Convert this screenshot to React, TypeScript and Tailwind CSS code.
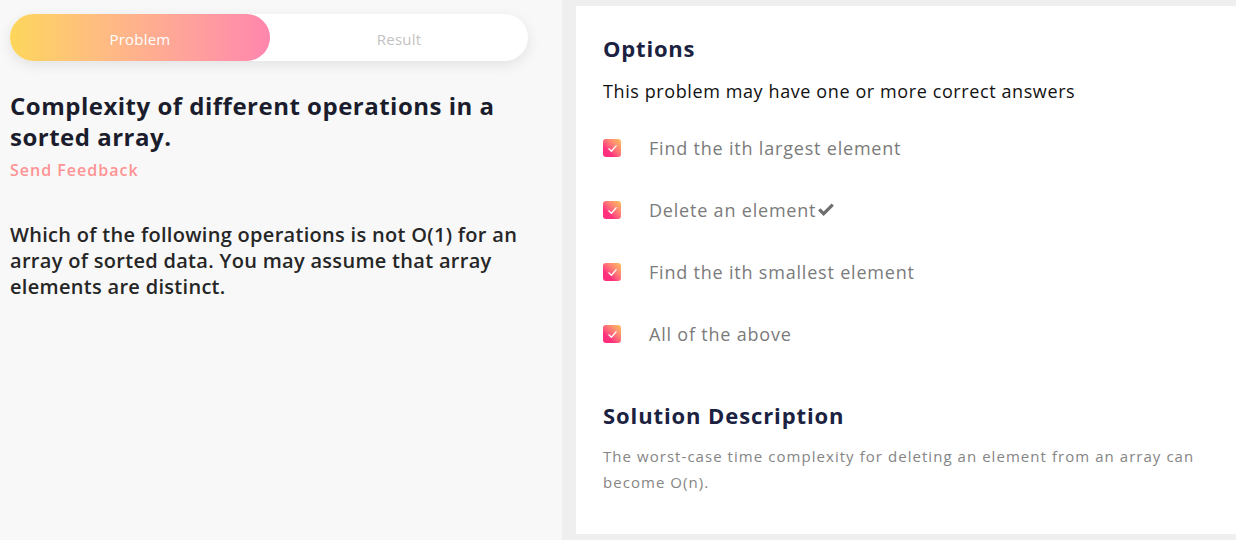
const options = [
  { text: 'Find the ith largest element', correct: false },
  { text: 'Delete an element', correct: true },
  { text: 'Find the ith smallest element', correct: false },
  { text: 'All of the above', correct: false },
];

function CheckBox() {
  return (
    <span className="flex h-[18px] w-[18px] shrink-0 items-center justify-center rounded-[3px] bg-gradient-to-tr from-[#ff2f7e] from-30% to-[#ffc25a]">
      <svg viewBox="0 0 12 12" className="h-[11px] w-[11px]" fill="none" stroke="white" strokeWidth="1.3" strokeLinecap="round" strokeLinejoin="round">
        <path d="M2 6.3 4.8 9 10 3" />
      </svg>
    </span>
  );
}

export default function App() {
  return (
    <div className="flex h-[540px] w-[1236px] bg-[#efefef] font-['Open_Sans',sans-serif]">
      {/* Left: problem */}
      <div className="w-[562px] shrink-0 bg-[#f8f8f8] px-[10px] pt-[14px]">
        <div className="flex h-[47px] w-[518px] rounded-full bg-white shadow-[0_4px_14px_rgba(0,0,0,0.09)]">
          <div className="flex w-[260px] items-center justify-center rounded-full bg-gradient-to-r from-[#fdd65a] to-[#ff86ae] pt-[3px] text-[15px] tracking-[0.2px] text-white">
            Problem
          </div>
          <div className="flex flex-1 items-center justify-center pt-[3px] text-[15px] tracking-[0.2px] text-[#c2c2c2]">Result</div>
        </div>

        <h1 className="mt-[29px] w-[510px] text-[24px] font-bold leading-[31px] tracking-[0.5px] text-[#1b1d2d]">
          Complexity of different operations in a sorted array.
        </h1>
        <p className="mt-[6px] text-[16px] font-semibold tracking-[1px] text-[#ff9393]">Send Feedback</p>

        <p className="mt-[40px] w-[530px] text-[20px] font-semibold leading-[26px] tracking-[0.3px] text-[#262626]">
          Which of the following operations is not O(1) for an array of sorted data. You may assume that array elements are distinct.
        </p>
      </div>

      {/* Right: options */}
      <div className="ml-[14px] mt-[6px] h-[528px] flex-1 bg-white pl-[27px] pr-[30px] pt-[25px]">
        <h2 className="text-[22px] font-bold leading-[34px] tracking-[0.8px] text-[#1b2140]">Options</h2>
        <p className="mt-[13px] text-[18px] tracking-[0.6px] text-[#111]">This problem may have one or more correct answers</p>

        <div className="mt-[12px] flex flex-col">
          {options.map((o) => (
            <div key={o.text} className="flex h-[62px] items-center">
              <CheckBox />
              <span className="ml-[28px] flex items-center text-[18px] tracking-[0.8px] text-[#7b7b7b]">
                {o.text}
                {o.correct && (
                  <svg viewBox="0 0 20 16" className="ml-[1px] h-[14px] w-[18px]" fill="#6e6e6e">
                    <path d="M1 8.5 3.6 5.9 7.3 9.6 16.4.5 19 3.1 7.3 14.8Z" />
                  </svg>
                )}
              </span>
            </div>
          ))}
        </div>

        <h2 className="mt-[33px] text-[22px] font-bold leading-[34px] tracking-[0.9px] text-[#1b2140]">Solution Description</h2>
        <p className="mt-[11px] text-[15px] leading-[26px] tracking-[1.05px] text-[#858585]">
          The worst-case time complexity for deleting an element from an array can become O(n).
        </p>
      </div>
    </div>
  );
}
